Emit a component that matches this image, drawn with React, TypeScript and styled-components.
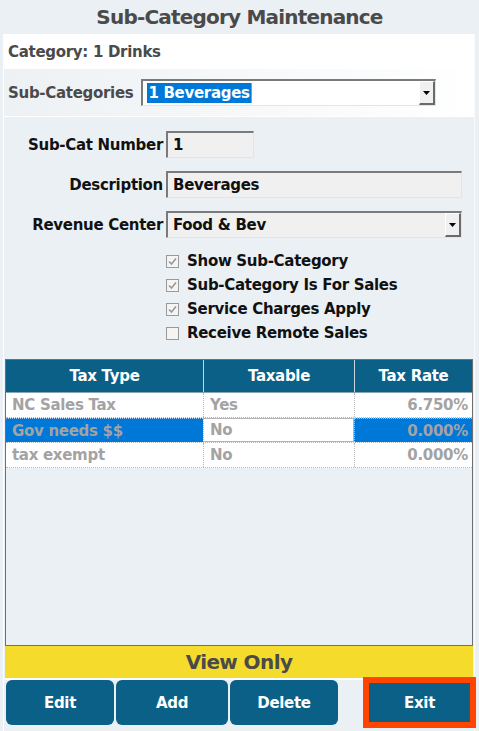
import React from "react";
import styled, { createGlobalStyle } from "styled-components";

const colors = {
  page: "#ebf0f4",
  ink: "#4a4a4a",
  black: "#111111",
  navy: "#0a6087",
  select: "#0078d7",
  muted: "#a3a3a3",
  field: "#f0f0f0",
  yellow: "#f5db2c",
  exit: "#ff4500",
};

const GlobalStyle = createGlobalStyle`
  html, body {
    margin: 0;
    padding: 0;
    background: ${colors.page};
  }
  body {
    font-family: "DejaVu Sans", Verdana, sans-serif;
    font-weight: bold;
  }
`;

const Page = styled.div`
  width: 479px;
  height: 731px;
  display: flex;
  flex-direction: column;
  box-sizing: border-box;
  overflow: hidden;
`;

const Title = styled.h1`
  margin: 0;
  height: 34px;
  line-height: 34px;
  text-align: center;
  font-size: 20px;
  letter-spacing: -0.8px;
  color: ${colors.ink};
`;

const Panel = styled.div`
  margin: 0 4px 0 3px;
  border-left: 1px solid #ffffff;
  border-right: 1px solid #f8fafb;
  display: flex;
  flex-direction: column;
  flex: 1;
`;

const CategoryRow = styled.div`
  height: 35px;
  display: flex;
  align-items: center;
  padding-left: 4px;
  background: #ffffff;
  font-size: 15px;
  letter-spacing: -0.3px;
  color: ${colors.ink};
`;

const PickerRow = styled.div`
  height: 47px;
  display: flex;
  align-items: center;
  gap: 8px;
  padding-left: 4px;
  background: linear-gradient(to right, #edf1f4, #ffffff);
  border-bottom: 1px solid #ffffff;
  font-size: 15px;
  letter-spacing: -0.3px;
  color: ${colors.ink};
`;

const Field = styled.div<{ width: number; white?: boolean }>`
  position: relative;
  box-sizing: border-box;
  width: ${({ width }) => width}px;
  height: 27px;
  display: flex;
  align-items: center;
  padding-left: 5px;
  background: ${({ white }) => (white ? "#ffffff" : colors.field)};
  border-top: 2px solid #7a7a7a;
  border-left: 2px solid #7a7a7a;
  border-bottom: 1px solid #e4e4e4;
  border-right: 1px solid #e4e4e4;
  font-size: 15px;
  letter-spacing: -0.3px;
  color: ${colors.black};
`;

const Highlight = styled.span`
  background: ${colors.select};
  color: #ffffff;
  padding: 0 1px;
  margin-left: -1px;
  line-height: 20px;
  border-right: 1px solid #f08040;
`;

const DropButton = styled.span`
  position: absolute;
  right: 0;
  top: 0;
  bottom: 0;
  width: 16px;
  box-sizing: border-box;
  background: ${colors.field};
  border-top: 1px solid #ffffff;
  border-left: 1px solid #ffffff;
  border-right: 2px solid #6a6a6a;
  border-bottom: 2px solid #6a6a6a;
  display: flex;
  align-items: center;
  justify-content: center;
`;

const Form = styled.div`
  padding: 14px 0 14px 0;
  display: flex;
  flex-direction: column;
`;

const FormRow = styled.div`
  display: grid;
  grid-template-columns: 159px auto;
  column-gap: 3px;
  align-items: center;
  margin-bottom: 13px;
`;

const Label = styled.span`
  text-align: right;
  font-size: 15px;
  letter-spacing: -0.3px;
  color: ${colors.black};
`;

const Checks = styled.div`
  margin-top: -2px;
  padding-left: 162px;
  display: flex;
  flex-direction: column;
`;

const CheckRow = styled.div`
  height: 24px;
  display: flex;
  align-items: center;
  gap: 8px;
  font-size: 15px;
  letter-spacing: -0.3px;
  color: ${colors.black};
`;

const Box = styled.span`
  width: 13px;
  height: 13px;
  box-sizing: border-box;
  border: 1px solid #9a9a9a;
  background: #f4f4f4;
  display: flex;
  align-items: center;
  justify-content: center;
`;

const Grid = styled.div`
  margin: 0 1px 0 1px;
  border: 1px solid #707070;
  background: ${colors.page};
  flex: 1;
  display: flex;
  flex-direction: column;
`;

const columns = "197px 151px 1fr";

const HeadRow = styled.div`
  display: grid;
  grid-template-columns: ${columns};
  height: 32px;
  background: ${colors.navy};
  border-bottom: 1px solid #8aa4b4;
`;

const HeadCell = styled.div`
  display: flex;
  align-items: center;
  justify-content: center;
  font-size: 15px;
  letter-spacing: -0.3px;
  color: #ffffff;
  & + & {
    border-left: 1px solid #c9d3da;
  }
`;

const BodyRow = styled.div`
  display: grid;
  grid-template-columns: ${columns};
  height: 24px;
  background: #ffffff;
  border-bottom: 1px dotted #b8b8b8;
`;

const Cell = styled.div<{ right?: boolean; selected?: boolean; focused?: boolean }>`
  box-sizing: border-box;
  display: flex;
  align-items: center;
  justify-content: ${({ right }) => (right ? "flex-end" : "flex-start")};
  padding: 0 4px 0 6px;
  font-size: 15px;
  letter-spacing: -0.3px;
  color: ${colors.muted};
  background: ${({ selected }) => (selected ? colors.select : "#ffffff")};
  border-top: ${({ selected }) => (selected ? "1px dotted #9fc6ea" : "none")};
  ${({ focused }) => focused && "border: 1px solid #b4b4b4;"}
  & + & {
    border-left: 1px dotted #b8b8b8;
  }
`;

const Banner = styled.div`
  height: 32px;
  margin: 0 1px;
  background: ${colors.yellow};
  display: flex;
  align-items: center;
  justify-content: center;
  font-size: 20px;
  letter-spacing: -0.6px;
  color: ${colors.ink};
  border-bottom: 2px solid #ffffff;
`;

const Actions = styled.div`
  display: flex;
  align-items: flex-start;
  padding: 0 0 3px 2px;
  gap: 2px;
`;

const Button = styled.button<{ width: number }>`
  width: ${({ width }) => width}px;
  height: 45px;
  border: none;
  border-radius: 6px;
  background: ${colors.navy};
  color: #ffffff;
  font-family: inherit;
  font-weight: bold;
  font-size: 15px;
  letter-spacing: -0.3px;
  padding: 0;
`;

const ExitFrame = styled.div`
  margin-left: auto;
  margin-right: -2px;
  margin-top: -3px;
  border: 6px solid ${colors.exit};
  display: flex;
`;

const ExitButton = styled(Button)`
  border-radius: 0;
  height: 39px;
`;

const Arrow = () => (
  <svg width="7" height="4" viewBox="0 0 7 4">
    <polygon points="0,0 7,0 3.5,4" fill="#000" />
  </svg>
);

const Tick = () => (
  <svg width="9" height="9" viewBox="0 0 9 9">
    <polyline points="1,4.5 3.5,7 8,1.5" fill="none" stroke="#9a9a9a" strokeWidth="1.6" />
  </svg>
);

const checks = [
  { label: "Show Sub-Category", on: true },
  { label: "Sub-Category Is For Sales", on: true },
  { label: "Service Charges Apply", on: true },
  { label: "Receive Remote Sales", on: false },
];

const taxes = [
  { type: "NC Sales Tax", taxable: "Yes", rate: "6.750%" },
  { type: "Gov needs $$", taxable: "No", rate: "0.000%", selected: true },
  { type: "tax exempt", taxable: "No", rate: "0.000%" },
];

export default function App() {
  return (
    <Page>
      <GlobalStyle />
      <Title>Sub-Category Maintenance</Title>
      <Panel>
        <CategoryRow>Category: 1 Drinks</CategoryRow>
        <PickerRow>
          <span>Sub-Categories</span>
          <Field width={295} white>
            <Highlight>1 Beverages</Highlight>
            <DropButton>
              <Arrow />
            </DropButton>
          </Field>
        </PickerRow>
        <Form>
          <FormRow>
            <Label>Sub-Cat Number</Label>
            <Field width={88}>1</Field>
          </FormRow>
          <FormRow>
            <Label>Description</Label>
            <Field width={296}>Beverages</Field>
          </FormRow>
          <FormRow>
            <Label>Revenue Center</Label>
            <Field width={296}>
              Food &amp; Bev
              <DropButton>
                <Arrow />
              </DropButton>
            </Field>
          </FormRow>
          <Checks>
            {checks.map((c) => (
              <CheckRow key={c.label}>
                <Box>{c.on && <Tick />}</Box>
                {c.label}
              </CheckRow>
            ))}
          </Checks>
        </Form>
        <Grid>
          <HeadRow>
            <HeadCell>Tax Type</HeadCell>
            <HeadCell>Taxable</HeadCell>
            <HeadCell>Tax Rate</HeadCell>
          </HeadRow>
          {taxes.map((t) => (
            <BodyRow key={t.type}>
              <Cell selected={t.selected}>{t.type}</Cell>
              <Cell focused={t.selected}>{t.taxable}</Cell>
              <Cell right selected={t.selected}>
                {t.rate}
              </Cell>
            </BodyRow>
          ))}
        </Grid>
        <Banner>View Only</Banner>
        <Actions>
          <Button width={108}>Edit</Button>
          <Button width={112}>Add</Button>
          <Button width={108}>Delete</Button>
          <ExitFrame>
            <ExitButton width={101}>Exit</ExitButton>
          </ExitFrame>
        </Actions>
      </Panel>
    </Page>
  );
}
